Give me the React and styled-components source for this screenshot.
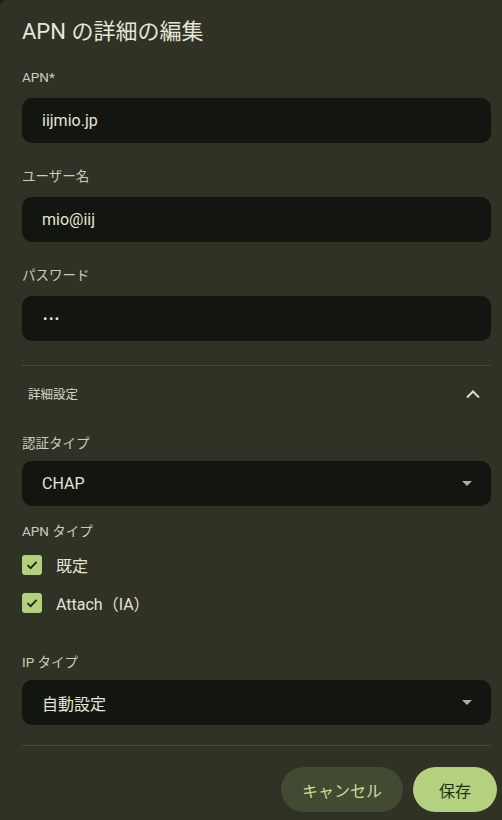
import styled, { createGlobalStyle } from 'styled-components';

const GlobalStyle = createGlobalStyle`
  html, body {
    margin: 0;
    padding: 0;
    background: #1c1d15;
  }
  body {
    font-family: "Roboto", "Noto Sans CJK JP", sans-serif;
  }
`;

export default function App() {
  return (
    <>
      <GlobalStyle />
      <Dialog>
        <Title>APN の詳細の編集</Title>

        <Label $top={21}>APN*</Label>
        <Input>iijmio.jp</Input>

        <Label $top={23}>ユーザー名</Label>
        <Input>mio@iij</Input>

        <Label $top={23}>パスワード</Label>
        <Input><Dots>•••</Dots></Input>

        <Divider $top={24} />

        <Expander>
          <span>詳細設定</span>
          <svg width="16" height="10" viewBox="0 0 16 10">
            <path d="M2 8.5 L8 2.5 L14 8.5" fill="none" stroke="#dcdfc6" strokeWidth="2" />
          </svg>
        </Expander>

        <Label $top={12} $gap={8}>認証タイプ</Label>
        <Select>
          CHAP
          <Caret />
        </Select>

        <Label $top={15}>APN タイプ</Label>
        <Checks>
          <CheckRow>
            <Box><Tick /></Box>
            既定
          </CheckRow>
          <CheckRow>
            <Box><Tick /></Box>
            Attach（IA）
          </CheckRow>
        </Checks>

        <Label $top={30} $gap={8}>IP タイプ</Label>
        <Select>
          自動設定
          <Caret />
        </Select>

        <Divider $top={20} />

        <Footer>
          <Button>キャンセル</Button>
          <Button $primary>保存</Button>
        </Footer>
      </Dialog>
    </>
  );
}

function Tick() {
  return (
    <svg width="14" height="14" viewBox="0 0 14 14">
      <path d="M2.5 7.2 L5.6 10.2 L11.6 3.8" fill="none" stroke="#1d2711" strokeWidth="1.8" />
    </svg>
  );
}

const Dialog = styled.div`
  background: #2f3224;
  border-top-left-radius: 6px;
  min-height: 820px;
  box-sizing: border-box;
  padding: 18px 11px 0 22px;
  display: flex;
  flex-direction: column;
  color: #e3e4d5;
`;

const Title = styled.h1`
  margin: 0;
  font-size: 22px;
  line-height: 28px;
  font-weight: 400;
  color: #e4e5d6;
`;

const Label = styled.div`
  margin-top: ${p => p.$top}px;
  margin-bottom: ${p => p.$gap ?? 11}px;
  font-size: 13.5px;
  line-height: 20px;
  font-weight: 400;
  color: #c9ccbb;
`;

const Input = styled.div`
  height: 45px;
  border-radius: 10px;
  background: #131510;
  display: flex;
  align-items: center;
  padding: 0 20px;
  font-size: 16px;
  color: #e3e4d5;
`;

const Dots = styled.span`
  font-size: 13px;
  letter-spacing: 1.5px;
  padding-left: 1px;
`;

const Select = styled(Input)`
  justify-content: space-between;
  padding-right: 19px;
`;

const Caret = styled.span`
  width: 0;
  height: 0;
  border-left: 5px solid transparent;
  border-right: 5px solid transparent;
  border-top: 5px solid #a9acb0;
`;

const Divider = styled.hr`
  margin: ${p => p.$top}px 0 0;
  border: 0;
  height: 1px;
  background: #46493a;
`;

const Expander = styled.div`
  height: 55px;
  display: flex;
  align-items: center;
  justify-content: space-between;
  padding: 0 10px 0 6px;
  font-size: 12.5px;
  color: #d6d8c8;
`;

const Checks = styled.div`
  margin-top: -6px;
  display: flex;
  flex-direction: column;
`;

const CheckRow = styled.div`
  height: 38px;
  display: flex;
  align-items: center;
  gap: 14px;
  font-size: 16px;
  color: #e3e4d5;
`;

const Box = styled.span`
  width: 20px;
  height: 20px;
  border-radius: 3px;
  background: #b4cf7e;
  display: flex;
  align-items: center;
  justify-content: center;
`;

const Footer = styled.div`
  margin: 21px -6px 0 0;
  display: flex;
  justify-content: flex-end;
  gap: 10px;
`;

const Button = styled.button`
  height: 45px;
  border: 0;
  border-radius: 23px;
  padding: 0 ${p => (p.$primary ? 26 : 21)}px;
  font-family: inherit;
  font-size: 16px;
  background: ${p => (p.$primary ? '#b5d17f' : '#424a31')};
  color: ${p => (p.$primary ? '#243012' : '#cadd9f')};
`;
